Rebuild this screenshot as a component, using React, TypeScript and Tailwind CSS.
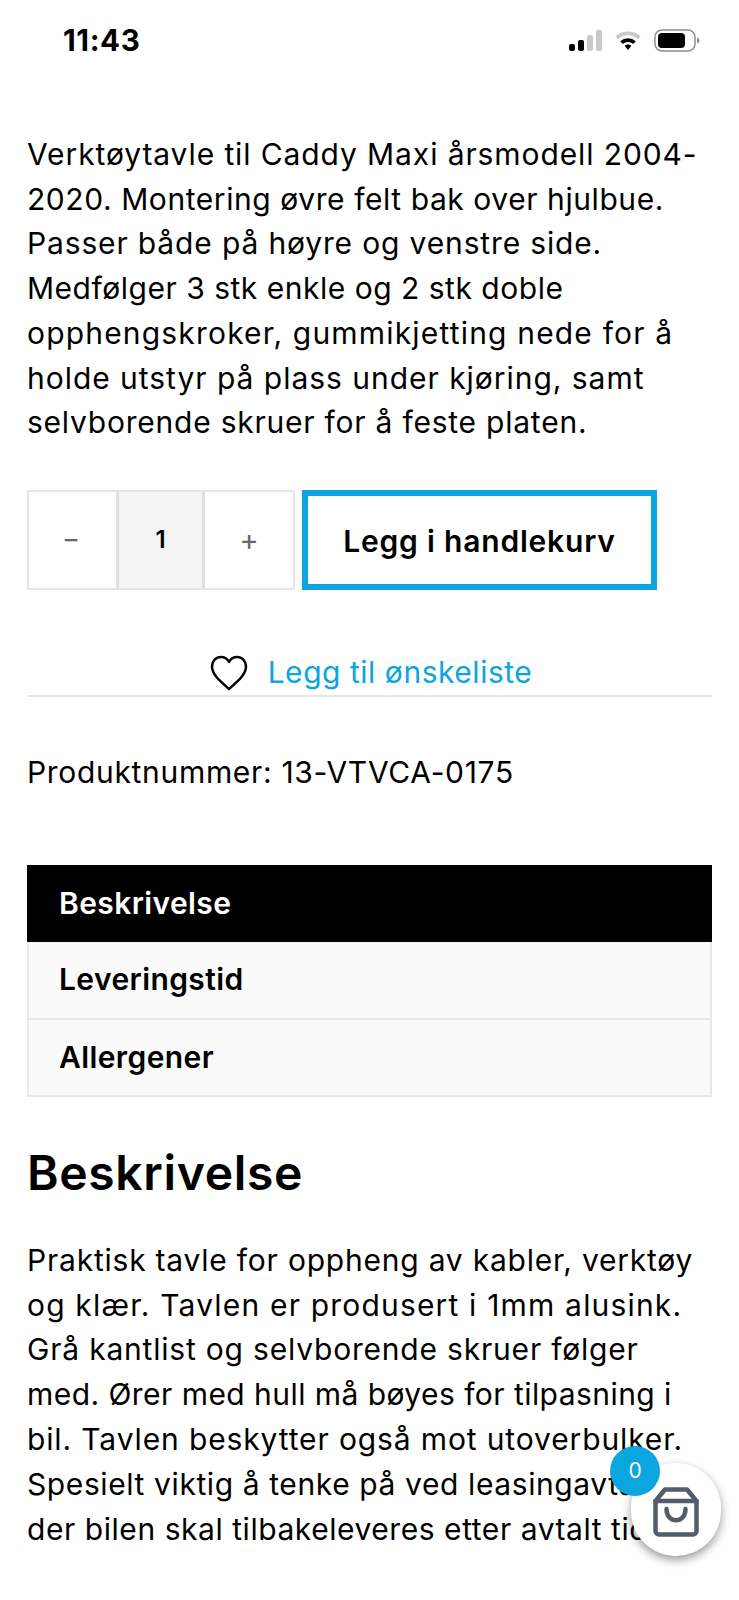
// per-line tracking keeps the hard line breaks the same width as the page copy
const intro = [
  { text: "Verktøytavle til Caddy Maxi årsmodell 2004-", tracking: "tracking-[0.9px]" },
  { text: "2020. Montering øvre felt bak over hjulbue.", tracking: "tracking-[0.57px]" },
  { text: "Passer både på høyre og venstre side.", tracking: "tracking-[0.85px]" },
  { text: "Medfølger 3 stk enkle og 2 stk doble", tracking: "tracking-[0.51px]" },
  { text: "opphengskroker, gummikjetting nede for å", tracking: "tracking-[1.18px]" },
  { text: "holde utstyr på plass under kjøring, samt", tracking: "tracking-[0.97px]" },
  { text: "selvborende skruer for å feste platen.", tracking: "tracking-[0.77px]" },
];

const description = [
  { text: "Praktisk tavle for oppheng av kabler, verktøy", tracking: "tracking-[0.78px]" },
  { text: "og klær. Tavlen er produsert i 1mm alusink.", tracking: "tracking-[1.18px]" },
  { text: "Grå kantlist og selvborende skruer følger", tracking: "tracking-[0.8px]" },
  { text: "med. Ører med hull må bøyes for tilpasning i", tracking: "tracking-[0.45px]" },
  { text: "bil. Tavlen beskytter også mot utoverbulker.", tracking: "tracking-[0.87px]" },
  { text: "Spesielt viktig å tenke på ved leasingavtaler", tracking: "tracking-[0.6px]" },
  { text: "der bilen skal tilbakeleveres etter avtalt tid", tracking: "tracking-[0.55px]" },
];

const StatusBar = () => (
  <div className="flex h-[80px] items-center justify-between pl-[63px] pr-[39px]">
    <span className="text-[29.5px] font-bold tracking-[0.6px] text-black">11:43</span>
    <div className="flex items-center gap-[12px]">
      <svg width="33" height="21" viewBox="0 0 33 21">
        <rect x="0" y="14" width="6" height="7" rx="2" fill="#000" />
        <rect x="9" y="10" width="6" height="11" rx="2" fill="#000" />
        <rect x="18" y="5" width="6" height="16" rx="2" fill="#c9c9c9" />
        <rect x="27" y="0" width="6" height="21" rx="2" fill="#c9c9c9" />
      </svg>
      <svg width="28" height="22" viewBox="0 0 28 22">
        <path d="M1.500 7.500a18 18 0 0 1 25 0l-2.600 2.800a14.200 14.200 0 0 0-19.800 0z" fill="#c9c9c9" />
        <path d="M6.200 12.200a11.500 11.500 0 0 1 15.600 0l-2.600 2.800a7.600 7.600 0 0 0-10.400 0z" fill="#000" />
        <path d="M10.600 16.800a5 5 0 0 1 6.800 0L14 21z" fill="#000" />
      </svg>
      <svg width="46" height="23" viewBox="0 0 46 23">
        <rect x="1" y="1" width="40" height="21" rx="7" fill="none" stroke="#8e8e8e" strokeWidth="1.500" />
        <rect x="4" y="4" width="27" height="15" rx="4" fill="#000" />
        <path d="M43 8.500c1.600.5 2.500 1.600 2.500 3s-.9 2.500-2.500 3z" fill="#8e8e8e" />
      </svg>
    </div>
  </div>
);

const QuantityPicker = () => (
  <div className="flex h-[100px] w-[268px] border-2 border-[#e6e6e6] text-[#666]">
    <div className="flex w-[87px] items-center justify-center pr-[3px] text-[25px] font-medium">–</div>
    <div className="flex w-[89px] items-center justify-center border-x-[3px] border-[#e0e0e0] bg-[#f4f4f4] text-[24px] font-semibold text-black">
      1
    </div>
    <div className="flex flex-1 items-center justify-center text-[29px]">+</div>
  </div>
);

const CartButton = () => (
  <div className="absolute left-[631px] top-[1463px] h-[93px] w-[90px] rounded-full bg-white shadow-[0_4px_10px_rgba(0,0,0,0.4)]">
    <div className="flex h-full items-center justify-center pt-[4px]">
      <svg width="46" height="50" viewBox="0 0 46 50" fill="none" stroke="#525c6b" strokeWidth="4.500" strokeLinejoin="round" strokeLinecap="round">
        <path d="M2.500 14 12 2.500h22L43.500 14v30a3.500 3.500 0 0 1-3.500 3.500H6A3.500 3.500 0 0 1 2.500 44z" />
        <path d="M2.500 14h41" />
        <path d="M13.500 22c0 15 19 15 19 0" />
      </svg>
    </div>
    <div className="absolute -left-[21px] -top-[17px] flex h-[50px] w-[50px] items-center justify-center rounded-full bg-[#0ba5e0] text-[21px] text-white">
      0
    </div>
  </div>
);

export default function App() {
  return (
    <div className="relative h-[1600px] overflow-hidden bg-white font-['Inter',sans-serif] text-black">
      <StatusBar />

      <div className="px-[27px] pt-[52px]">
        <div className="text-[30px] leading-[44.7px]">
          {intro.map((line) => (
            <div key={line.text} className={`whitespace-nowrap ${line.tracking}`}>{line.text}</div>
          ))}
        </div>

        <div className="mt-[45px] flex gap-[7px]">
          <QuantityPicker />
          <div className="flex h-[100px] w-[355px] items-center justify-center border-[6px] border-[#0ba5e0] pt-[3px] text-[30px] font-semibold tracking-[0.8px]">
            Legg i handlekurv
          </div>
        </div>

        <div className="mt-[59px] flex h-[48px] items-center justify-center gap-[20px] border-b-2 border-[#e6e6e6] pl-[3px] pt-[2px]">
          <svg width="38" height="36" viewBox="0 0 38 36" fill="none" stroke="#000" strokeWidth="2.500" strokeLinejoin="round">
            <path d="M19 34C10 26 2 19.500 2 11.500 2 6 6 2 11 2c3.500 0 6.500 2 8 5 1.500-3 4.500-5 8-5 5 0 9 4 9 9.500C36 19.500 28 26 19 34z" />
          </svg>
          <span className="text-[30px] tracking-[0.53px] text-[#0ba5e0]">Legg til ønskeliste</span>
        </div>

        <div className="mt-[53px] whitespace-nowrap text-[30px] leading-[44.7px] tracking-[0.68px]">
          Produktnummer: 13-VTVCA-0175
        </div>

        <div className="mt-[70px] text-[30px] font-semibold tracking-[0.4px]">
          <div className="flex h-[77px] items-center bg-black pl-[32px] text-white">Beskrivelse</div>
          <div className="flex h-[78px] items-center border-x-2 border-b-2 border-[#e8e8e8] bg-[#fafafa] pl-[30px]">Leveringstid</div>
          <div className="flex h-[77px] items-center border-x-2 border-b-2 border-[#e8e8e8] bg-[#fafafa] pl-[30px]">Allergener</div>
        </div>

        <h2 className="mt-[41px] text-[48px] font-semibold leading-[70px] tracking-[0.65px]">Beskrivelse</h2>

        <div className="mt-[30px] text-[30px] leading-[44.9px]">
          {description.map((line) => (
            <div key={line.text} className={`whitespace-nowrap ${line.tracking}`}>{line.text}</div>
          ))}
        </div>
      </div>

      <CartButton />
    </div>
  );
}
